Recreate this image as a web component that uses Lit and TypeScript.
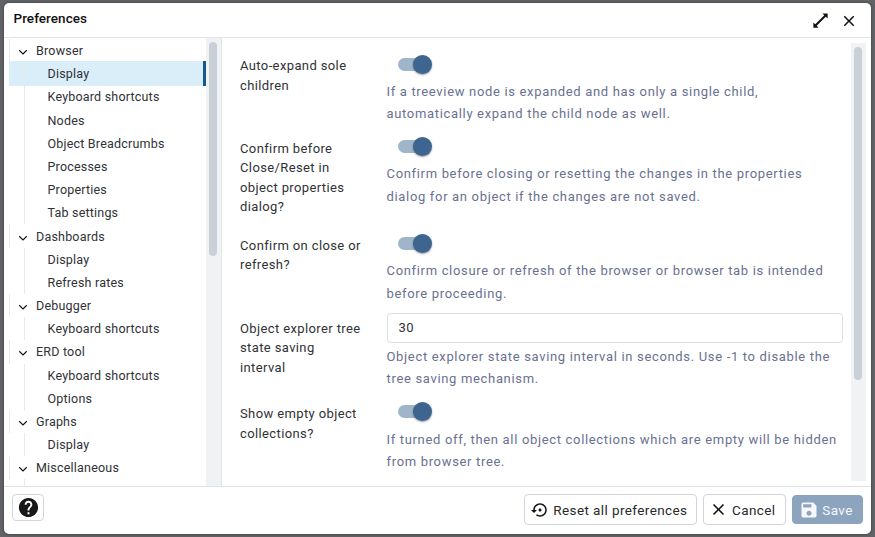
import { LitElement, html, css, svg } from "lit";
import { customElement, property } from "lit/decorators.js";
import { classMap } from "lit/directives/class-map.js";

interface Group { name: string; items: string[]; }
interface Pref { label: string[]; help: string[]; value?: string; }

const groups: Group[] = [
  { name: "Browser", items: ["Display", "Keyboard shortcuts", "Nodes", "Object Breadcrumbs", "Processes", "Properties", "Tab settings"] },
  { name: "Dashboards", items: ["Display", "Refresh rates"] },
  { name: "Debugger", items: ["Keyboard shortcuts"] },
  { name: "ERD tool", items: ["Keyboard shortcuts", "Options"] },
  { name: "Graphs", items: ["Display"] },
  { name: "Miscellaneous", items: [""] },
];

const prefs: Pref[] = [
  { label: ["Auto-expand sole", "children"], help: ["If a treeview node is expanded and has only a single child,", "automatically expand the child node as well."] },
  { label: ["Confirm before", "Close/Reset in", "object properties", "dialog?"], help: ["Confirm before closing or resetting the changes in the properties", "dialog for an object if the changes are not saved."] },
  { label: ["Confirm on close or", "refresh?"], help: ["Confirm closure or refresh of the browser or browser tab is intended", "before proceeding."] },
  { label: ["Object explorer tree", "state saving", "interval"], value: "30", help: ["Object explorer state saving interval in seconds. Use -1 to disable the", "tree saving mechanism."] },
  { label: ["Show empty object", "collections?"], help: ["If turned off, then all object collections which are empty will be hidden", "from browser tree."] },
];

const icons: Record<string, unknown> = {
  expand: svg`<path d="M14.4 3H21v6.6l-2.4-2.4L7.2 18.6 9.6 21H3v-6.6l2.4 2.4L16.8 5.4z"/>`,
  close: svg`<path d="M19 6.41 17.59 5 12 10.59 6.41 5 5 6.41 10.59 12 5 17.59 6.41 19 12 13.41 17.59 19 19 17.59 13.41 12z"/>`,
  help: svg`<path d="M12 2C6.48 2 2 6.48 2 12s4.48 10 10 10 10-4.48 10-10S17.52 2 12 2zm1 17h-2v-2h2v2zm2.07-7.75-.9.92C13.45 12.9 13 13.5 13 15h-2v-.5c0-1.1.45-2.1 1.17-2.83l1.24-1.26c.37-.36.59-.86.59-1.41 0-1.1-.9-2-2-2s-2 .9-2 2H8c0-2.21 1.79-4 4-4s4 1.79 4 4c0 .88-.36 1.68-.93 2.25z"/>`,
  reset: svg`<path d="M14 12c0-1.1-.9-2-2-2s-2 .9-2 2 .9 2 2 2 2-.9 2-2zm-2-9c-4.97 0-9 4.03-9 9H0l4 4 4-4H5c0-3.87 3.13-7 7-7s7 3.13 7 7-3.13 7-7 7c-1.51 0-2.91-.49-4.06-1.3l-1.42 1.44C8.04 20.3 9.94 21 12 21c4.97 0 9-4.03 9-9s-4.03-9-9-9z"/>`,
  save: svg`<path d="M17 3H5c-1.11 0-2 .9-2 2v14c0 1.1.89 2 2 2h14c1.1 0 2-.9 2-2V7l-4-4zm-5 16c-1.66 0-3-1.34-3-3s1.34-3 3-3 3 1.34 3 3-1.34 3-3 3zm3-10H5V5h10v4z"/>`,
  chevron: svg`<path d="M4.5 8.5 12 16 19.5 8.5" fill="none" stroke="currentColor" stroke-width="2.3"/>`,
};

@customElement("ui-icon")
class UiIcon extends LitElement {
  @property() name = "";
  static styles = css`
    :host { display: block; flex: none; }
    svg { display: block; width: 100%; height: 100%; fill: currentColor; }
  `;
  render() { return html`<svg viewBox="0 0 24 24">${icons[this.name]}</svg>`; }
}

@customElement("pref-tree")
class PrefTree extends LitElement {
  static styles = css`
    :host { display: block; overflow: hidden; flex: 1; padding: 0.9px 0 0 5px; color: #303236; font-size: 12.5px; letter-spacing: 0.2px; }
    .row { display: flex; align-items: center; height: 23.2px; white-space: nowrap; }
    .group { border-left: 1px solid #e8e9ed; padding-left: 7px; gap: 7px; }
    .arrow { width: 12px; height: 12px; margin-top: 3px; color: #111; }
    .leaf { position: relative; padding-left: 38.5px; }
    .leaf::before { content: ""; position: absolute; left: 15px; top: 0; bottom: 0; width: 1px; background: #e8e9ed; }
    .active { background: #daeefa; box-shadow: inset -3px 0 #135a8c; height: 25px; margin: -1px 0 -0.8px; }
  `;
  render() {
    return groups.map((g, gi) => html`
      <div class="row group"><ui-icon class="arrow" name="chevron"></ui-icon><span>${g.name}</span></div>
      ${g.items.map((item, i) => html`<div class=${classMap({ row: true, leaf: true, active: gi === 0 && i === 0 })}>${item}</div>`)}
    `);
  }
}

@customElement("pref-row")
class PrefRow extends LitElement {
  @property({ attribute: false }) pref!: Pref;
  static styles = css`
    :host { display: grid; grid-template-columns: 146.5px 1fr; align-items: start; white-space: nowrap; }
    .label { font-size: 13px; line-height: 19.5px; letter-spacing: 0.38px; color: #303236; }
    .help { font-size: 13px; line-height: 22.2px; letter-spacing: 0.67px; color: #6a7190; }
    .slot { display: flex; align-items: center; height: 24px; padding-left: 11px; }
    .track { width: 33px; height: 13px; border-radius: 7px; background: #9fb5ca; display: flex; align-items: center; justify-content: flex-end; }
    .thumb { flex: none; width: 19px; height: 19px; margin-right: -1.5px; border-radius: 50%; background: #3d658f; box-shadow: 0 1px 2px #0006; }
    .field { box-sizing: border-box; height: 30px; margin: -5.7px 0 3.2px; border: 1px solid #dcdfe6; border-radius: 4px; padding: 0 11px; line-height: 28px; font-size: 13px; letter-spacing: 0.4px; color: #303236; }
    .toggle { margin-top: -4.2px; margin-bottom: 4.8px; }
  `;
  render() {
    const p = this.pref;
    return html`
      <div class="label">${p.label.map((l) => html`<div>${l}</div>`)}</div>
      <div>
        ${p.value ? html`<div class="field">${p.value}</div>` : html`<div class="slot toggle"><div class="track"><div class="thumb"></div></div></div>`}
        <div class="help">${p.help.map((l) => html`<div>${l}</div>`)}</div>
      </div>`;
  }
}

@customElement("app-root")
class AppRoot extends LitElement {
  static styles = css`
    :host { display: block; box-sizing: border-box; height: 537px; padding: 3px 4px; background: #626366; font-family: Roboto, "Liberation Sans", sans-serif; }
    .dialog { height: 531px; background: #fff; border-radius: 5px; overflow: hidden; display: flex; flex-direction: column; box-shadow: 0 0 3px #0007; }
    .header { box-sizing: border-box; height: 35px; flex: none; display: flex; align-items: center; border-bottom: 1px solid #e2e4ec; padding: 0 14px 3px 9.5px; color: #111; }
    .title { flex: 1; font-size: 13.5px; font-weight: 500; letter-spacing: 0.05px; margin-top: -2px; }
    .expand { width: 19px; height: 19px; margin: 4px 10.5px 0 0; }
    .x { width: 18px; height: 18px; margin-top: 4px; margin-right: -1px; }
    .body { height: 448px; display: flex; flex: none; overflow: hidden; }
    .side { box-sizing: border-box; width: 218px; display: flex; border-right: 1.5px solid #e2e4ec; flex: none; }
    .gutter { box-sizing: border-box; width: 15px; background: #f1f2f4; padding: 4px 4px 0 3px; flex: none; }
    .bar { width: 8px; border-radius: 4px; background: #cad0d7; }
    .short { height: 214px; }
    .long { height: 333px; }
    .prefs { flex: 1; display: grid; grid-template-rows: 82.4px 97px 82.8px 85.5px 80px; padding: 18.4px 8px 0 18px; }
    .right { margin: 5px 5px 5px 0; }
    .footer { flex: 1; border-top: 1px solid #dfe1ea; display: flex; align-items: flex-start; padding: 7px 8px 0 8px; }
    .button { box-sizing: border-box; display: flex; align-items: center; height: 31px; border: 1px solid #cfd4df; border-radius: 4px; font-size: 13.5px; letter-spacing: 0.4px; color: #2a2a2a; white-space: nowrap; }
    .spacer { flex: 1; }
    .help { width: 32px; height: 27px; justify-content: center; color: #181818; }
    .help ui-icon { width: 23px; height: 23px; }
    .reset { width: 173px; padding-left: 6px; gap: 4.3px; margin-right: 6px; }
    .reset ui-icon { width: 18px; height: 18px; color: #111; }
    .cancel { width: 83px; padding-left: 5px; gap: 4px; margin-right: 6px; }
    .cancel ui-icon { width: 19px; height: 19px; color: #111; }
    .save { width: 71px; height: 29px; margin-top: 1px; padding-left: 6px; gap: 3.3px; border-color: #8ca4be; background: #8ca4be; color: #f6f8fb; }
    .save ui-icon { width: 20px; height: 20px; }
  `;
  render() {
    return html`
      <div class="dialog">
        <div class="header">
          <div class="title">Preferences</div>
          <ui-icon class="expand" name="expand"></ui-icon>
          <ui-icon class="x" name="close"></ui-icon>
        </div>
        <div class="body">
          <div class="side"><pref-tree></pref-tree><div class="gutter"><div class="bar short"></div></div></div>
          <div class="prefs">${prefs.map((p) => html`<pref-row .pref=${p}></pref-row>`)}</div>
          <div class="gutter right"><div class="bar long"></div></div>
        </div>
        <div class="footer">
          <div class="button help"><ui-icon name="help"></ui-icon></div>
          <div class="spacer"></div>
          <div class="button reset"><ui-icon name="reset"></ui-icon>Reset all preferences</div>
          <div class="button cancel"><ui-icon name="close"></ui-icon>Cancel</div>
          <div class="button save"><ui-icon name="save"></ui-icon>Save</div>
        </div>
      </div>`;
  }
}
